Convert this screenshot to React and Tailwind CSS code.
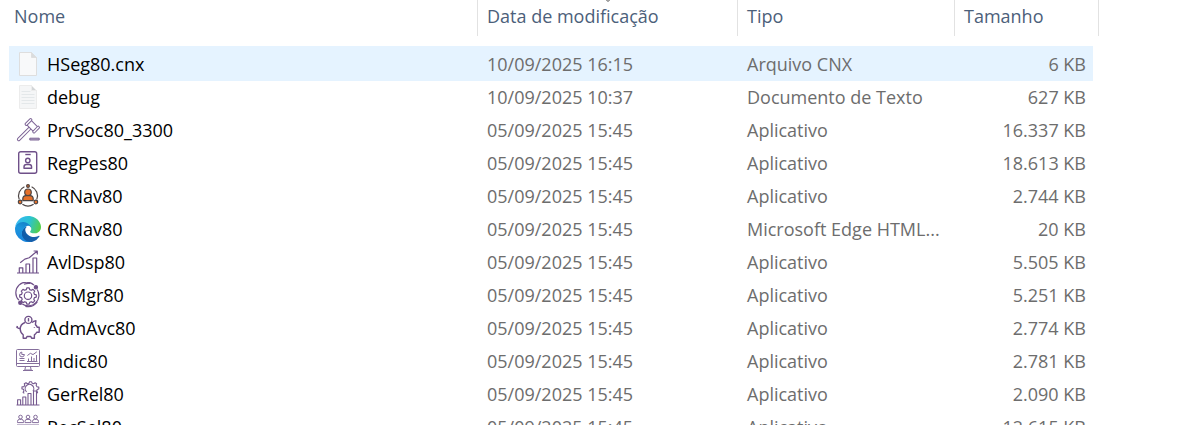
import React from 'react';

const files = [
  { icon: 'blank', name: 'HSeg80.cnx', date: '10/09/2025 16:15', type: 'Arquivo CNX', size: '6 KB', selected: true },
  { icon: 'text', name: 'debug', date: '10/09/2025 10:37', type: 'Documento de Texto', size: '627 KB' },
  { icon: 'gavel', name: 'PrvSoc80_3300', date: '05/09/2025 15:45', type: 'Aplicativo', size: '16.337 KB' },
  { icon: 'badge', name: 'RegPes80', date: '05/09/2025 15:45', type: 'Aplicativo', size: '18.613 KB' },
  { icon: 'network', name: 'CRNav80', date: '05/09/2025 15:45', type: 'Aplicativo', size: '2.744 KB' },
  { icon: 'edge', name: 'CRNav80', date: '05/09/2025 15:45', type: 'Microsoft Edge HTML...', size: '20 KB' },
  { icon: 'growth', name: 'AvlDsp80', date: '05/09/2025 15:45', type: 'Aplicativo', size: '5.505 KB' },
  { icon: 'gear', name: 'SisMgr80', date: '05/09/2025 15:45', type: 'Aplicativo', size: '5.251 KB' },
  { icon: 'piggy', name: 'AdmAvc80', date: '05/09/2025 15:45', type: 'Aplicativo', size: '2.774 KB' },
  { icon: 'monitor', name: 'Indic80', date: '05/09/2025 15:45', type: 'Aplicativo', size: '2.781 KB' },
  { icon: 'gearChart', name: 'GerRel80', date: '05/09/2025 15:45', type: 'Aplicativo', size: '2.090 KB' },
  { icon: 'people', name: 'RecSel80', date: '05/09/2025 15:45', type: 'Aplicativo', size: '12.615 KB' },
];

const icons = {
  blank: (
    <g stroke="#dedede" strokeWidth="1">
      <path d="M4.5 1.5h12l5 5v18h-17z" fill="#f8f9fa" />
      <path d="M16.5 1.5v5h5z" fill="#d9dcde" />
    </g>
  ),
  text: (
    <g stroke="#ececec" strokeWidth="1">
      <path d="M4.5 1.5h12l5 5v18h-17z" fill="#f5f6f7" />
      <path d="M16.5 1.5v5h5z" fill="#d3d6d8" />
      <path d="M6.5 7.5h9M6.5 10.5h13M6.5 13.5h13M6.5 16.5h13M6.5 19.5h13" stroke="#e4e8ea" />
    </g>
  ),
  gavel: (
    <g strokeWidth="1" stroke="#7d6496">
      <g transform="translate(17.3 8.8) rotate(45)">
        <path d="M-1.3 3.2v16a1.3 1.3 0 0 0 2.6 0v-16" />
        <path d="M-4.2 -3h8.4M-4.2 3.2h8.4" />
        <rect x="-6.6" y="-4.2" width="2.4" height="8.4" rx="1" />
        <rect x="4.2" y="-4.2" width="2.4" height="8.4" rx="1" />
      </g>
      <path d="M14.8 21.2h9.4v1.8h-9.4z" fill="#b3a3c2" />
    </g>
  ),
  badge: (
    <g strokeWidth="1.4">
      <rect x="3.7" y="1.7" width="18" height="21.5" rx="2" />
      <path d="M10.3 4.5h5.4" />
      <circle cx="12.8" cy="10.5" r="2.2" />
      <path d="M9 18.3v-1.4a2.4 2.4 0 0 1 2.4-2.4h2.8a2.4 2.4 0 0 1 2.4 2.4v1.4z" />
    </g>
  ),
  network: (
    <g stroke="#4d4544" strokeWidth="1.2">
      <path d="M4.2 16.4A9.9 9.9 0 0 1 9.4 3.8M16.6 3.8a9.9 9.9 0 0 1 5.2 12.6M7.4 21.2a9.9 9.9 0 0 0 11.2 0" />
      <circle cx="13" cy="9.3" r="3.3" fill="#e5702a" />
      <path d="M7.8 17.6v-1.8c0-1.9 1.3-3.2 3.2-3.2h4c1.9 0 3.2 1.3 3.2 3.2v1.8z" fill="#e5702a" />
      <circle cx="13" cy="3" r="1.4" fill="#e5702a" />
      <circle cx="5.1" cy="19" r="1.8" fill="#e5702a" />
      <circle cx="20.9" cy="19" r="1.8" fill="#e5702a" />
    </g>
  ),
  edge: (
    <g stroke="none" transform="scale(.1015625)">
      <defs>
        <linearGradient id="edgeDark" x1="63" y1="180" x2="241" y2="180" gradientUnits="userSpaceOnUse">
          <stop offset="0" stopColor="#0f5ca8" />
          <stop offset="1" stopColor="#1a62ae" />
        </linearGradient>
        <linearGradient id="edgeBlue" x1="120" y1="70" x2="60" y2="235" gradientUnits="userSpaceOnUse">
          <stop offset="0" stopColor="#1583c9" />
          <stop offset=".4" stopColor="#1b96dd" />
          <stop offset="1" stopColor="#1a86dc" />
        </linearGradient>
        <linearGradient id="edgeGreen" x1="20" y1="40" x2="245" y2="120" gradientUnits="userSpaceOnUse">
          <stop offset="0" stopColor="#35b8f1" />
          <stop offset=".5" stopColor="#2bc3d2" />
          <stop offset="1" stopColor="#55cf4b" />
        </linearGradient>
      </defs>
      <path fill="url(#edgeDark)" d="M235.68 195.46a93.73 93.73 0 0 1-10.54 4.71 101.87 101.87 0 0 1-35.9 6.46c-47.32 0-88.54-32.55-88.54-74.32a31.48 31.48 0 0 1 16.43-27.31c-42.8 1.8-53.8 46.4-53.8 72.53 0 73.88 68.09 81.37 82.76 81.37 7.91 0 19.84-2.3 27-4.56l1.31-.44a128.34 128.34 0 0 0 66.6-52.8 4 4 0 0 0-5.32-5.64z" />
      <path fill="url(#edgeBlue)" d="M105.73 241.42a79.2 79.2 0 0 1-22.74-21.34 80.72 80.72 0 0 1 29.53-120c3.12-1.47 8.45-4.13 15.54-4a32.35 32.35 0 0 1 25.69 13 31.88 31.88 0 0 1 6.36 18.66c0-.21 24.46-79.6-80-79.6-43.9 0-80 41.66-80 78.21a130.15 130.15 0 0 0 12.11 56 128 128 0 0 0 156.38 67.11 75.55 75.55 0 0 1-62.78-8z" />
      <path fill="url(#edgeGreen)" d="M152.33 148.86c-.81 1.05-3.3 2.5-3.3 5.66 0 2.61 1.7 5.12 4.72 7.23 14.38 10 41.49 8.68 41.56 8.68a59.56 59.56 0 0 0 30.27-8.35 61.38 61.38 0 0 0 30.43-52.88c.26-22.41-8-37.31-11.34-43.91-21.19-41.45-66.93-65.29-116.67-65.29a128 128 0 0 0-128 126.2c.48-36.54 36.8-66.05 80-66.05 3.5 0 23.46.34 42 10.07 16.34 8.58 24.9 18.94 30.85 29.21 6.18 10.67 7.28 24.15 7.28 29.52s-2.74 13.33-7.82 19.91z" />
    </g>
  ),
  growth: (
    <g strokeWidth="1.2">
      <path d="M2 24h22M4.3 24V18.8h3.5V24M11 24v-9h3.6v9M18 24V9h3.7v15" />
      <path d="M5.2 13.7l4.6-3.6 4.4-1.4 7.8-6.5M18.6 2H22.3v3.6" />
    </g>
  ),
  gear: (
    <g strokeWidth="1.2">
      <path d="M3.9 18.2A10.6 10.6 0 0 1 19 3.2M22.2 7.5A10.6 10.6 0 0 1 7.3 22" />
      <path d="M15.4 1.5a11.6 11.6 0 0 0-6.4.7M10.4 24.4a11.6 11.6 0 0 0 12-4.8" />
      <path d="M11.8 5.8h2.4l.5 1.8 1.6.7 1.7-.9 1.7 1.7-.9 1.7.7 1.6 1.8.5v2.2l-1.8.5-.7 1.6.9 1.7-1.7 1.7-1.7-.9-1.6.7-.5 1.8h-2.4l-.5-1.8-1.6-.7-1.7.9-1.7-1.7.9-1.7-.7-1.6-1.8-.5v-2.2l1.8-.5.7-1.6-.9-1.7L8 7.4l1.7.9 1.6-.7z" />
      <circle cx="13" cy="13.7" r="3.7" />
      <circle cx="20.9" cy="5.2" r="1.6" fill="#6f5089" />
      <circle cx="5.3" cy="20.7" r="1.6" fill="#6f5089" />
    </g>
  ),
  piggy: (
    <g strokeWidth="1.4">
      <circle cx="13.4" cy="4.9" r="3.5" />
      <path d="M12.9 3.6h.6v2.8" />
      <path d="M10 7.5c-3 1.2-4.8 3.6-4.8 6.6 0 2.4 1.2 4.3 3 5.6v3.6h3l.8-1.8h3.8l.8 1.8h2.8v-3.4c1-.7 1.8-1.5 2.3-2.6h2.5v-5h-2c-.4-1.2-1-2-1.8-2.7l.5-3.8c-1.7.1-3 .8-3.8 1.9" />
      <path d="M5.4 13.4c-2 .5-3.6-.8-3-2.4M2.4 12.8l-1-1.2" />
      <path d="M19.4 12.2v.7" />
    </g>
  ),
  monitor: (
    <g strokeWidth="1" stroke="#856e9c">
      <rect x="1.5" y="1.5" width="23" height="17" rx="1" />
      <path d="M1.5 15.5h23M10.6 18.5l-.8 3.5h6.4l-.8-3.5M8 22.5h10" />
      <path d="M9.4 6.5a2.4 2.4 0 1 1-2.6-2.4v2.4zM4.5 10.5h5M4.5 12.5h5" />
      <path d="M12 13.5h10.4M13.5 13.5v-3M16.5 13.5v-5M19 13.5V10M21.5 13.5V7M12.4 7.5l3-2.2 2.6 1.3 3.8-2.8" />
    </g>
  ),
  gearChart: (
    <g strokeWidth="1.1" stroke="#775b90">
      <path d="M1.5 24h23M2.6 24v-5.3h3V24M7.8 24v-8h3v8M13 24V12.5h3V24M18.5 24v-14h3v14" />
      <path d="M9.3 12.3l-1.2-1 .9-1.4-.6-1.6-1.5-.4.1-2 1.9-.3.9-1.4-.5-1.4 1.7-1.1 1.4 1 1.5-.4.7-1.5h1.9l.7 1.5 1.5.4 1.4-1 1.5 1.1-.5 1.5.9 1.4 1.8.4v1.9l-1.6.5-.5 1.5.9 1.4-1.2 1.1" />
      <path d="M11.6 10.8A4.3 4.3 0 1 1 18 10.1" />
    </g>
  ),
  people: (
    <g strokeWidth="1" stroke="#856e9c">
      {[5.5, 13, 20.5].map((x) => (
        <g key={x} transform={`translate(${x} 0)`}>
          <circle cy="3" r="1.8" />
          <path d="M-3 8.6V7.4q0-2 2-2h2q2 0 2 2v1.2z" />
        </g>
      ))}
      <path d="M2 11h22v3H2z" />
    </g>
  ),
};

const FileIcon = ({ name }) => (
  <svg width="26" height="26" viewBox="0 0 26 26" fill="none" stroke="#6f5089" strokeLinejoin="round" className="shrink-0" aria-hidden="true">
    {icons[name]}
  </svg>
);

const HeaderCell = ({ label, className = 'pl-[9px]', colSpan, sorted }) => (
  <th scope="col" colSpan={colSpan} className="p-0 pb-[10px] font-normal" aria-sort={sorted ? 'descending' : undefined}>
    <div className={`relative flex h-9 items-center border-r border-[#e2e2e2] pb-1 ${className}`}>
      {label}
      {sorted && (
        <svg width="9" height="5" viewBox="0 0 9 5" fill="none" stroke="#444" className="absolute left-1/2 -top-[3px] -translate-x-1/2">
          <path d="M.5.5l4 4 4-4" />
        </svg>
      )}
    </div>
  </th>
);

const FileRow = ({ file }) => {
  const cell = file.selected ? 'p-0 bg-[#e5f3ff]' : 'p-0 pb-[2px]';
  return (
    <tr className={file.selected ? 'h-[35px]' : 'h-[33px]'}>
      <td className={`${cell} pl-[6px] text-black`}>
        <div className="flex items-center gap-[6px]">
          <FileIcon name={file.icon} />
          <span>{file.name}</span>
        </div>
      </td>
      <td className={`${cell} pl-[9px]`}>{file.date}</td>
      <td className={`${cell} pl-[9px]`}>{file.type}</td>
      <td className={`${cell} pr-[7px] text-right`}>{file.size}</td>
      <td className="p-0"></td>
    </tr>
  );
};

const App = () => {
  return (
    <main className="h-screen overflow-hidden bg-white pl-[9px] pr-[98px] font-['Open_Sans','Noto_Sans',sans-serif] text-[18px] leading-6 text-[#6d6d6d]">
      <table className="w-full table-fixed border-collapse whitespace-nowrap text-left">
        <colgroup>
          <col />
          <col className="w-[260px]" />
          <col className="w-[217px]" />
          <col className="w-[138px]" />
          <col className="w-[6px]" />
        </colgroup>
        <thead className="text-[#4c607a]">
          <tr>
            <HeaderCell label="Nome" className="pl-[5px]" />
            <HeaderCell label="Data de modificação" sorted />
            <HeaderCell label="Tipo" />
            <HeaderCell label="Tamanho" colSpan={2} />
          </tr>
        </thead>
        <tbody>
          {files.map((file) => (
            <FileRow key={file.icon} file={file} />
          ))}
        </tbody>
      </table>
    </main>
  );
};

export default App;
